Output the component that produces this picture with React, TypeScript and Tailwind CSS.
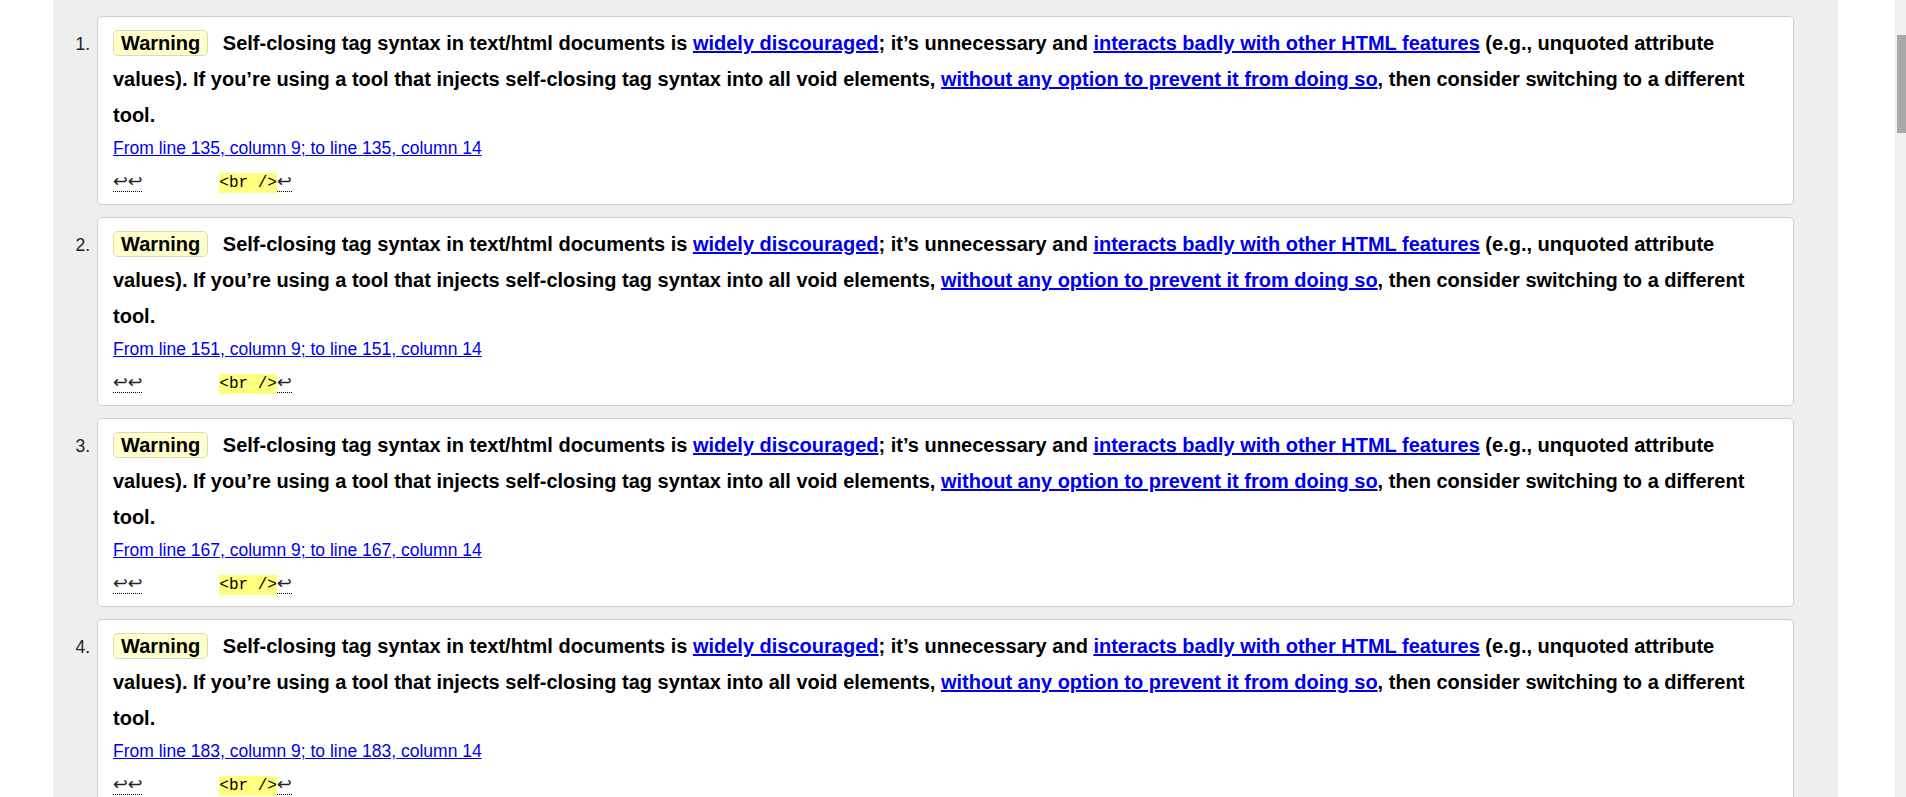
import React from 'react'

const lines = [135, 151, 167, 183, 199]

const linkCls = 'text-[#0000ee] underline'

function Message({ line, index }: { line: number; index: number }) {
  return (
    <li className="flex items-baseline">
      <span className="w-[44px] shrink-0 pr-[7px] text-right text-[17.5px] text-[#222]">{index + 1}.</span>
      <div className="flex-1 rounded-[5px] border border-[#cfcfcf] bg-white pl-[15px] pr-[15px] pt-[8px] pb-[9px]">
        <p className="text-[20px] font-bold leading-[36px] text-black">
          <strong className="mr-[9px] inline-block rounded-[5px] border border-[#dcdab4] bg-[#ffffcc] px-[7px] leading-[24px]">
            Warning
          </strong>{' '}
          <span>
            Self-closing tag syntax in text/html documents is{' '}
            <a href="#" className={linkCls}>widely discouraged</a>; it’s unnecessary and{' '}
            <a href="#" className={linkCls}>interacts badly with other HTML features</a> (e.g., unquoted attribute
            values). If you’re using a tool that injects self-closing tag syntax into all void elements,{' '}
            <a href="#" className={linkCls}>without any option to prevent it from doing so</a>, then consider
            switching to a different tool.
          </span>
        </p>
        <p className="mt-[2px] text-[17.5px] leading-[26px]">
          <a href="#" className={linkCls}>
            From line {line}, column 9; to line {line}, column 14
          </a>
        </p>
        <p className="mt-[10px] h-[24px] whitespace-pre font-['Liberation_Mono','DejaVu_Sans_Mono',monospace] text-[16px] leading-[24px] text-black">
          <b className="border-b border-dotted border-black font-['DejaVu_Sans',sans-serif] text-[17.6px] font-normal leading-none text-[#222]">↩↩</b>
          {'        '}
          <mark className="bg-[#ffff80] py-[1px] leading-none text-black">&lt;br /&gt;</mark>
          <b className="border-b border-dotted border-black font-['DejaVu_Sans',sans-serif] text-[17.6px] font-normal leading-none text-[#222]">↩</b>
        </p>
      </div>
    </li>
  )
}

export default function App() {
  return (
    <div className="flex h-[797px] w-full overflow-hidden bg-white font-['Liberation_Sans',Arial,sans-serif]">
      <div className="w-[53px] shrink-0" />
      <main className="w-[1785px] shrink-0 bg-[#eeeeee] pt-[16px] pr-[44px]">
        <ol className="flex flex-col gap-[12px]">
          {lines.map((line, i) => (
            <Message key={line} line={line} index={i} />
          ))}
        </ol>
      </main>
      <div className="w-[57px] shrink-0" />
      <div className="flex w-[11px] shrink-0 flex-col bg-[#f0f0f0] pt-[35px] pl-[2px]">
        <div className="h-[98px] w-[9px] bg-[#a8a8a8]" />
      </div>
    </div>
  )
}
